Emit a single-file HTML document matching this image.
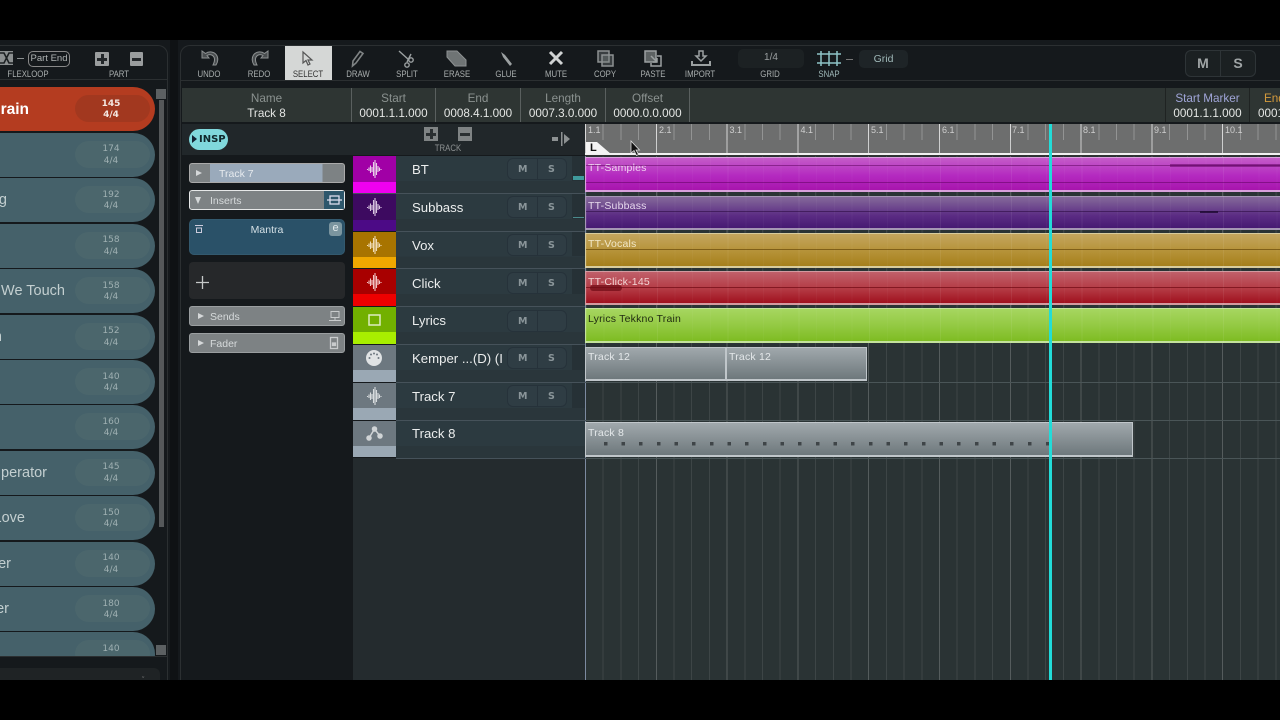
<!DOCTYPE html>
<html><head><meta charset="utf-8">
<style>
html,body{margin:0;padding:0;width:1280px;height:720px;overflow:hidden;background:#000}
body{position:relative;font-family:"Liberation Sans",sans-serif;color:#ccc}
div,span{position:absolute;box-sizing:border-box}
svg{position:absolute;overflow:visible}
.t{white-space:nowrap;text-align:center;transform:translateX(-50%)}
.lab{font-size:9.5px;color:#a9aeae;top:69px;transform:translateX(-50%) scaleX(.82)}
.pill{left:-40px;width:195px;height:44px;background:#45616a;border-radius:0 22px 22px 0;}
.pill .in{left:115px;top:8px;width:75px;height:27px;background:#4b666c;border-radius:14px}
.pill .n{left:116px;width:70px;text-align:center;font:9px/11.5px "DejaVu Sans",sans-serif;color:#9fb0b2;top:11.5px;white-space:pre}
.pill .s{font-size:14.5px;color:#c3cfd0;top:14px;white-space:nowrap}
.hdr{top:88px;height:34px;background:#2e3533;border-right:1px solid #5a605f}
.hdr .a{left:0;right:0;top:4px;text-align:center;font-size:11.7px;color:#8b9290}
.hdr .b{left:0;right:0;top:19px;text-align:center;font-size:11.7px;color:#e4e6e4}
.row{left:396px;width:189px;background:linear-gradient(#2c3a40 0,#2c3a40 68%,#2a363b 68%,#2a363b 100%);border-bottom:1px solid #46525a}
.strip::after{content:"";position:absolute;left:176px;right:0;top:0;height:68%;background:#263136}
.cu{left:353px;width:43px}
.cl{left:353px;width:43px}
.nm{left:412px;font-size:13.2px;color:#eceeee;white-space:nowrap}
.ms{left:507px;width:60px;height:22px;background:#2f3d44;border:1px solid #26323a;border-radius:6px}
.ms b{position:absolute;top:5px;font:bold 9.5px "DejaVu Sans",sans-serif;color:#8a9599}
.ms i{position:absolute;left:29px;top:0;bottom:0;width:1px;background:#26323a}
.clip{left:585px;border:1px solid rgba(255,255,255,.35);border-bottom-width:2px}
.clip span{left:2px;top:4px;font-size:10.5px;letter-spacing:.2px;white-space:nowrap}
.grid{background-image:repeating-linear-gradient(90deg,rgba(255,255,255,.09) 0,rgba(255,255,255,.09) 1px,transparent 1px,transparent 17.7px),repeating-linear-gradient(90deg,rgba(255,255,255,.12) 0,rgba(255,255,255,.12) 1px,transparent 1px,transparent 70.8px)}
.insp{left:189px;width:156px;height:20px;border:1px solid #cfd3d4;border-radius:3px;background:#7d8284}
.insp span{font-size:10.5px;top:3.5px;color:#d6dadb;white-space:nowrap}
.tri{width:0;height:0;border-left:6px solid #d5d8d9;border-top:3.5px solid transparent;border-bottom:3.5px solid transparent}
</style></head><body>

<!-- main app background -->
<div style="left:0;top:40px;width:1280px;height:640px;background:#15191c"></div>
<div style="left:170px;top:40px;width:8px;height:640px;background:#0f1214"></div>
<div style="left:0;top:45px;width:168px;height:635px;border-right:1px solid #2b2f31;border-top:1px solid #2b2f31;border-top-right-radius:10px"></div>
<div style="left:180px;top:45px;width:1100px;height:635px;border-left:1px solid #2b2f31;border-top:1px solid #2b2f31;border-top-left-radius:10px"></div>
<div style="left:0;top:79px;width:168px;height:1px;background:#2b2f31"></div>
<div style="left:181px;top:80px;width:1099px;height:1px;background:#2b2f31"></div>

<!-- left toolbar -->
<svg style="left:0;top:50px" width="14" height="16"><rect x="-2" y="1" width="15" height="14" fill="#8b8f90"/><path d="M0 3 L4 3 L9 13 L13 13 M0 13 L4 13 L9 3 L13 3" stroke="#1c2022" stroke-width="1.6" fill="none"/></svg>
<div style="left:17px;top:58px;width:7px;height:1px;background:#8b8f90"></div>
<div style="left:28px;top:51px;width:42px;height:16px;border:1px solid #888;border-radius:5px;font-size:9.500px;line-height:14px;text-align:center;color:#b0b4b4;white-space:nowrap">Part End</div>
<div class="t lab" style="left:28px">FLEXLOOP</div>
<div class="t lab" style="left:119px">PART</div>
<div style="left:95px;top:52px;width:14px;height:14px;background:#9a9d9e;border-radius:1px"></div>
<div style="left:100.5px;top:54px;width:3px;height:10px;background:#23272a"></div><div style="left:97px;top:57.5px;width:10px;height:3px;background:#23272a"></div>
<div style="left:130px;top:52px;width:13px;height:14px;background:#9a9d9e;border-radius:1px"></div>
<div style="left:132px;top:57.5px;width:9px;height:3px;background:#23272a"></div>

<!-- song list -->
<div class="pill" style="top:87px;background:#b43c20"><div class="in" style="background:#a2381f"></div><div class="n" style="color:#f3e6e0;font-weight:bold">145
4/4</div><div class="s" style="color:#fff;font-weight:bold;right:126px;font-size:15.5px;top:14px">rain</div></div>
<div class="pill" style="top:132.5px"><div class="in"></div><div class="n">174
4/4</div></div>
<div class="pill" style="top:178px"><div class="in"></div><div class="n">192
4/4</div><div class="s" style="right:148px">g</div></div>
<div class="pill" style="top:223.5px"><div class="in"></div><div class="n">158
4/4</div></div>
<div class="pill" style="top:269px"><div class="in"></div><div class="n">158
4/4</div><div class="s" style="right:90px">We Touch</div></div>
<div class="pill" style="top:314.5px"><div class="in"></div><div class="n">152
4/4</div><div class="s" style="right:153px">n</div></div>
<div class="pill" style="top:360px"><div class="in"></div><div class="n">140
4/4</div></div>
<div class="pill" style="top:405px"><div class="in"></div><div class="n">160
4/4</div></div>
<div class="pill" style="top:450.5px"><div class="in"></div><div class="n">145
4/4</div><div class="s" style="right:108px">perator</div></div>
<div class="pill" style="top:496px"><div class="in"></div><div class="n">150
4/4</div><div class="s" style="right:130px">Love</div></div>
<div class="pill" style="top:541.5px"><div class="in"></div><div class="n">140
4/4</div><div class="s" style="right:144px">er</div></div>
<div class="pill" style="top:587px"><div class="in"></div><div class="n">180
4/4</div><div class="s" style="right:146px">er</div></div>
<div style="left:0;top:632px;width:160px;height:24px;overflow:hidden"><div class="pill" style="top:0;left:-40px"><div class="in"></div><div class="n">140</div></div></div>
<div style="left:0;top:656px;width:167px;height:1px;background:#2b2f31"></div>
<div style="left:0;top:668px;width:160px;height:12px;background:#1f2325;border-radius:0 6px 0 0"></div>
<div style="left:142px;top:677px;width:6px;height:3px;font-size:7px;color:#999">ˇ</div>
<div style="left:159px;top:100px;width:5px;height:427px;background:#55585a"></div>
<div style="left:156px;top:89px;width:10px;height:10px;background:#5c6062"></div>
<div style="left:156px;top:645px;width:10px;height:10px;background:#5c6062"></div>

<!-- toolbar -->
<div style="left:285px;top:46px;width:47px;height:34px;background:#d5d7d6"></div>
<svg style="left:201px;top:50px" width="18" height="17"><path d="M1 1 L1 8 L8 8 L6 5.500 C9 3.500 13 5 13.500 9 C13.700 11 13 13 12 15 L15 15 C17 12 17.500 8 15.500 5 C13 1.500 8 1 4.500 3.500 Z" fill="#4a4e50" stroke="#8d9192" stroke-width="1"/></svg>
<svg style="left:251px;top:50px" width="18" height="17"><path d="M17 1 L17 8 L10 8 L12 5.500 C9 3.500 5 5 4.500 9 C4.300 11 5 13 6 15 L3 15 C1 12 .5 8 2.500 5 C5 1.500 10 1 13.500 3.500 Z" fill="#4a4e50" stroke="#8d9192" stroke-width="1"/></svg>
<svg style="left:302px;top:51px" width="12" height="16" fill="#d5d7d6" stroke="#555" stroke-width="1.2"><path d="M1 1 L1 12 L4 9.5 L6 14 L8 13 L6 9 L10 9 Z"/></svg>
<svg style="left:350px;top:50px" width="16" height="18" fill="none" stroke="#7f8384" stroke-width="1.6"><path d="M3 11 L10 1.5 L13 3.5 L6 13 L2.5 16 Z"/></svg>
<svg style="left:398px;top:50px" width="18" height="18" fill="none" stroke="#9ba0a1" stroke-width="1.4"><path d="M1 1 L11 10"/><path d="M13 4 L9 12"/><circle cx="13" cy="10" r="2.2"/><circle cx="9" cy="15" r="2.2"/></svg>
<svg style="left:446px;top:50px" width="22" height="18"><path d="M1 1 L11 1 L20 10 L20 16 L9 16 L1 7 Z" fill="#6f7475" stroke="#8d9192"/></svg>
<svg style="left:499px;top:51px" width="16" height="16"><path d="M2 1 L6 4 L13 13 L11 15 L4 6 Z" fill="#9ba0a1"/></svg>
<svg style="left:549px;top:51px" width="14" height="14" stroke="#d0d3d3" stroke-width="3"><path d="M1 1 L13 13 M13 1 L1 13"/></svg>
<svg style="left:597px;top:50px" width="17" height="17" fill="rgba(130,135,136,.35)" stroke="#8d9192" stroke-width="1.5"><rect x="1" y="1" width="11" height="11"/><rect x="5" y="5" width="11" height="11"/></svg>
<svg style="left:644px;top:50px" width="19" height="17" fill="none" stroke="#9ba0a1" stroke-width="1.5"><rect x="1" y="1" width="11" height="11" fill="#5d6263"/><path d="M13 6 L17 6 L17 16 L7 16 L7 13"/><path d="M7 6 L13 12 M13 8 L13 12 L9 12"/></svg>
<svg style="left:691px;top:50px" width="20" height="17" fill="none" stroke="#9ba0a1" stroke-width="1.5"><path d="M8 1 L12 1 L12 6 L15 6 L10 11 L5 6 L8 6 Z"/><path d="M1 11 L1 15 L19 15 L19 11" stroke-width="2"/></svg>

<div class="t lab" style="left:209px">UNDO</div>
<div class="t lab" style="left:259px">REDO</div>
<div class="t lab" style="left:308px;color:#333">SELECT</div>
<div class="t lab" style="left:358px">DRAW</div>
<div class="t lab" style="left:407px">SPLIT</div>
<div class="t lab" style="left:457px">ERASE</div>
<div class="t lab" style="left:506px">GLUE</div>
<div class="t lab" style="left:556px">MUTE</div>
<div class="t lab" style="left:605px">COPY</div>
<div class="t lab" style="left:653px">PASTE</div>
<div class="t lab" style="left:700px">IMPORT</div>
<div class="t lab" style="left:770px">GRID</div>
<div class="t lab" style="left:829px;color:#9fb8b8">SNAP</div>
<div style="left:738px;top:49px;width:66px;height:19px;background:#1c2123;border-radius:5px;font-size:10px;line-height:17px;text-align:center;color:#9a9fa0">1/4</div>
<svg style="left:817px;top:51px" width="25" height="16" stroke="#8fc4c6" stroke-width="1.5"><path d="M0 3 H24 M0 12 H24 M4 0 V15 M12 0 V15 M20 0 V15"/></svg>
<div style="left:846px;top:59px;width:7px;height:1px;background:#777"></div>
<div style="left:859px;top:50px;width:49px;height:18px;background:#1e2427;border-radius:5px;font-size:10.500px;line-height:18px;text-align:center;color:#9fb8b8">Grid</div>
<div style="left:1185px;top:50px;width:71px;height:27px;border:1px solid #2e3437;border-radius:6px;background:#1b2022"></div>
<div style="left:1220px;top:51px;width:1px;height:25px;background:#2e3437"></div>
<div class="t" style="left:1203px;top:55px;font:bold 14px 'Liberation Sans',sans-serif;color:#a0a5a6">M</div>
<div class="t" style="left:1238px;top:55px;font:bold 14px 'Liberation Sans',sans-serif;color:#a0a5a6">S</div>

<!-- info header -->
<div style="left:182px;top:88px;width:1098px;height:34px;background:#2e3533"></div>
<div class="hdr" style="left:182px;width:170px"><div class="a">Name</div><div class="b">Track 8</div></div>
<div class="hdr" style="left:352px;width:84px"><div class="a">Start</div><div class="b">0001.1.1.000</div></div>
<div class="hdr" style="left:436px;width:85px"><div class="a">End</div><div class="b">0008.4.1.000</div></div>
<div class="hdr" style="left:521px;width:85px"><div class="a">Length</div><div class="b">0007.3.0.000</div></div>
<div class="hdr" style="left:606px;width:84px"><div class="a">Offset</div><div class="b">0000.0.0.000</div></div>
<div class="hdr" style="left:1165px;width:85px;border-left:1px solid #1f2322;border-right:1px solid #1f2322"><div class="a" style="color:#a0a5d8">Start Marker</div><div class="b">0001.1.1.000</div></div>
<div style="left:1250px;top:88px;width:30px;height:34px;overflow:hidden"><div class="a" style="left:14px;top:4px;font-size:11.700px;color:#d49a3c;white-space:nowrap">End</div><div style="left:8px;top:19px;font-size:11.700px;color:#e4e6e4;white-space:nowrap">0001</div></div>

<!-- inspector header -->
<div style="left:182px;top:124px;width:171px;height:31px;background:#21272a"></div>
<div style="left:353px;top:124px;width:232px;height:31px;background:#21272a"></div>
<div style="left:189px;top:129px;width:39px;height:21px;background:#80d8dc;border-radius:11px"></div>
<div style="left:192px;top:135px;width:0;height:0;border-left:5px solid #123;border-top:4.5px solid transparent;border-bottom:4.5px solid transparent"></div>
<div style="left:199px;top:133.5px;font:bold 10px 'DejaVu Sans',sans-serif;color:#10282c">INSP</div>
<div style="left:424px;top:127px;width:14px;height:14px;background:#7f8384"></div>
<div style="left:429.500px;top:129px;width:3px;height:10px;background:#2a2f31"></div><div style="left:426px;top:132.5px;width:10px;height:3px;background:#2a2f31"></div>
<div style="left:458px;top:127px;width:14px;height:14px;background:#7f8384"></div>
<div style="left:460px;top:132.5px;width:10px;height:3px;background:#2a2f31"></div>
<div class="t" style="left:448px;top:143px;font-size:9.500px;color:#8d9192;transform:translateX(-50%) scaleX(.82)">TRACK</div>
<svg style="left:552px;top:131px" width="20" height="17" fill="#8d9192"><rect x="0" y="6" width="6" height="4"/><rect x="9" y="1" width="1.500" height="14"/><path d="M12 3 L18 8 L12 13 Z"/></svg>

<!-- inspector -->
<div class="insp" style="top:163px;border-color:#aaa;background:linear-gradient(90deg,#7d8284 0,#7d8284 13%,#9aaabb 13%,#9aaabb 86%,#7d8284 86%)"><div class="tri" style="left:6px;top:6px"></div><span style="left:29px;color:#e6eaee">Track 7</span></div>
<div class="insp" style="top:190px;border-color:#e6e8e8"><div class="tri" style="left:5px;top:6px;border:0;border-top:7px solid #d5d8d9;border-left:3.5px solid transparent;border-right:3.5px solid transparent"></div><span style="left:20px">Inserts</span><div style="right:0;top:0;bottom:0;width:20px;background:#2d566b"></div><svg style="left:137px;top:3px" width="15" height="12" stroke="#dde" fill="none" stroke-width="1.300"><path d="M0 6 H15"/><rect x="3" y="2" width="9" height="8"/></svg></div>
<div style="left:189px;top:219px;width:156px;height:36px;background:#2a5168;border-radius:5px;border:1px solid #33596e"></div>
<div class="t" style="left:267px;top:223.5px;font-size:10.500px;color:#d4e0e6">Mantra</div>
<svg style="left:195px;top:225px" width="8" height="9" fill="none" stroke="#ccd" stroke-width="1"><path d="M0 .5 H8"/><rect x="1.500" y="3" width="5" height="4.500"/></svg>
<div style="left:329px;top:222px;width:13px;height:14px;background:#7b959f;border-radius:3px;font-size:11px;line-height:13px;text-align:center;color:#e0e8ea">e</div>
<div style="left:189px;top:262px;width:156px;height:37px;background:#26282a;border-radius:4px"></div>
<svg style="left:196px;top:276px" width="13" height="13" stroke="#c5c8c8" stroke-width="1.300"><path d="M6.500 0 V13 M0 6.500 H13"/></svg>
<div class="insp" style="top:306px;border-color:#9a9ea0"><div class="tri" style="left:8px;top:6px"></div><span style="left:20px">Sends</span><svg style="left:139px;top:4px" width="12" height="11" fill="none" stroke="#c8cbcc"><rect x="2" y=".5" width="8" height="6"/><path d="M0 9.500 H12 M6 7 V9"/></svg></div>
<div class="insp" style="top:333px;border-color:#9a9ea0"><div class="tri" style="left:8px;top:6px"></div><span style="left:20px">Fader</span><svg style="left:140px;top:3px" width="8" height="12" fill="none" stroke="#c8cbcc" stroke-width="1.300"><rect x=".5" y=".5" width="7" height="11"/><rect x="2.500" y="6" width="3" height="2.500" fill="#c8cbcc"/></svg></div>

<!-- arrange -->
<div class="grid" style="left:585px;top:156px;width:695px;height:524px;background-color:#2a3334"></div>
<div style="left:585px;top:124px;width:1px;height:556px;background:#7c8aa0"></div>
<div style="left:353px;top:458px;width:232px;height:222px;background:#242b2e"></div>

<!-- ruler -->
<div style="left:585px;top:124px;width:695px;height:31px;background:#6d6e6e"></div>
<div style="left:585px;top:124px;width:695px;height:28px;background-image:repeating-linear-gradient(90deg,rgba(235,235,235,.3) 0,rgba(235,235,235,.3) 1px,transparent 1px,transparent 17.7px);clip-path:inset(0 0 12px 0)"></div>
<div style="left:585px;top:124px;width:695px;height:29px;background-image:repeating-linear-gradient(90deg,rgba(245,245,245,.7) 0,rgba(245,245,245,.7) 1px,transparent 1px,transparent 70.8px)"></div>
<div style="left:585px;top:153px;width:695px;height:3px;background:#f1f1f1;border-bottom:1px solid #333"></div>
<svg style="left:586px;top:142px" width="26" height="12"><path d="M0 0 L11 0 L25 12 L0 12 Z" fill="#f4f4f4"/></svg>
<div style="left:590px;top:142px;font:bold 11px 'Liberation Sans',sans-serif;color:#111">L</div>
<svg style="left:630px;top:140px" width="11" height="17"><path d="M1 1 L1 13 L4 10.500 L6.500 15.500 L8.500 14.500 L6 10 L9.500 10 Z" fill="#111" stroke="#ddd" stroke-width=".8"/></svg>
<span style="left:588px;top:125px;font-size:9px;color:#cfcfcf">1.1</span>
<span style="left:659px;top:125px;font-size:9px;color:#cfcfcf">2.1</span>
<span style="left:729.500px;top:125px;font-size:9px;color:#cfcfcf">3.1</span>
<span style="left:800.500px;top:125px;font-size:9px;color:#cfcfcf">4.1</span>
<span style="left:871px;top:125px;font-size:9px;color:#cfcfcf">5.1</span>
<span style="left:942px;top:125px;font-size:9px;color:#cfcfcf">6.1</span>
<span style="left:1012px;top:125px;font-size:9px;color:#cfcfcf">7.1</span>
<span style="left:1083px;top:125px;font-size:9px;color:#cfcfcf">8.1</span>
<span style="left:1154px;top:125px;font-size:9px;color:#cfcfcf">9.1</span>
<span style="left:1225px;top:125px;font-size:9px;color:#cfcfcf">10.1</span>

<!-- track rows -->
<div class="row strip" style="top:156px;height:38px"></div>
<div class="row strip" style="top:194px;height:38px"></div>
<div class="row strip" style="top:232px;height:37px"></div>
<div class="row strip" style="top:269px;height:38px"></div>
<div class="row" style="top:307px;height:38px"></div>
<div class="row strip" style="top:345px;height:38px"></div>
<div class="row strip" style="top:383px;height:38px"></div>
<div class="row" style="top:421px;height:38px"></div>
<div style="left:353px;top:193px;width:232px;height:1px;background:#46525a"></div>

<div class="cu" style="top:156px;height:26px;background:#a100a6"></div><div class="cl" style="top:182px;height:11px;background:#f000f0"></div>
<div class="cu" style="top:194px;height:26px;background:#3d0a60"></div><div class="cl" style="top:220px;height:11px;background:#4c0a86"></div>
<div class="cu" style="top:232px;height:25px;background:#a87400"></div><div class="cl" style="top:257px;height:11px;background:#f0a800"></div>
<div class="cu" style="top:269px;height:25px;background:#a80000"></div><div class="cl" style="top:294px;height:12px;background:#ee0000"></div>
<div class="cu" style="top:307px;height:25px;background:#72b000"></div><div class="cl" style="top:332px;height:12px;background:#a8ee00"></div>
<div class="cu" style="top:345px;height:25px;background:#6d7880"></div><div class="cl" style="top:370px;height:12px;background:#9aa8b4"></div>
<div class="cu" style="top:383px;height:25px;background:#6d7880"></div><div class="cl" style="top:408px;height:12px;background:#9aa8b4"></div>
<div class="cu" style="top:421px;height:25px;background:#6d7880"></div><div class="cl" style="top:446px;height:11px;background:#9aa8b4"></div>

<svg style="left:367px;top:160px" width="15" height="18" stroke="#e9cfe9" stroke-width="1.100"><path d="M0.500 9 V10 M2 7.500 V11 M3.500 5.500 V13 M5 7 V12 M6.500 2 V16 M8 0 V18 M9.500 3 V15 M11 6 V12 M12.500 7.500 V11 M14 9 V10"/></svg>
<svg style="left:367px;top:198px" width="15" height="18" stroke="#d8c4e0" stroke-width="1.100"><path d="M0.500 9 V10 M2 7.500 V11 M3.500 5.500 V13 M5 7 V12 M6.500 2 V16 M8 0 V18 M9.500 3 V15 M11 6 V12 M12.500 7.500 V11 M14 9 V10"/></svg>
<svg style="left:367px;top:236px" width="15" height="18" stroke="#f0dcb8" stroke-width="1.100"><path d="M0.500 9 V10 M2 7.500 V11 M3.500 5.500 V13 M5 7 V12 M6.500 2 V16 M8 0 V18 M9.500 3 V15 M11 6 V12 M12.500 7.500 V11 M14 9 V10"/></svg>
<svg style="left:367px;top:273px" width="15" height="18" stroke="#f0c4c4" stroke-width="1.100"><path d="M0.500 9 V10 M2 7.500 V11 M3.500 5.500 V13 M5 7 V12 M6.500 2 V16 M8 0 V18 M9.500 3 V15 M11 6 V12 M12.500 7.500 V11 M14 9 V10"/></svg>
<svg style="left:368px;top:314px" width="13" height="13" fill="none" stroke="#dcecc0" stroke-width="1.500"><rect x="1" y="1" width="11" height="10"/></svg>
<svg style="left:366px;top:350px" width="16" height="16"><circle cx="8" cy="8" r="8" fill="#e0e3e4"/><g fill="#6d7880"><circle cx="3.500" cy="8" r="1"/><circle cx="5" cy="4.500" r="1"/><circle cx="8" cy="3.500" r="1"/><circle cx="11" cy="4.500" r="1"/><circle cx="12.500" cy="8" r="1"/></g></svg>
<svg style="left:367px;top:387px" width="15" height="18" stroke="#d8dcde" stroke-width="1.100"><path d="M0.500 9 V10 M2 7.500 V11 M3.500 5.500 V13 M5 7 V12 M6.500 2 V16 M8 0 V18 M9.500 3 V15 M11 6 V12 M12.500 7.500 V11 M14 9 V10"/></svg>
<svg style="left:366px;top:426px" width="17" height="15" fill="#d0d4d6" stroke="#d0d4d6" stroke-width="1.500"><path d="M3 12 L8.500 3 L14 10" fill="none"/><circle cx="3" cy="12" r="2"/><circle cx="8.500" cy="3" r="2"/><circle cx="14" cy="10" r="2"/></svg>

<div class="nm" style="top:162px">BT</div>
<div class="nm" style="top:200px">Subbass</div>
<div class="nm" style="top:238px">Vox</div>
<div class="nm" style="top:276px">Click</div>
<div class="nm" style="top:313px">Lyrics</div>
<div class="nm" style="top:351px;width:93px;overflow:hidden">Kemper ...(D) (I</div>
<div class="nm" style="top:389px">Track 7</div>
<div class="nm" style="top:426px">Track 8</div>

<div class="ms" style="top:158px"><b style="left:10px">M</b><i></i><b style="left:40px">S</b></div>
<div class="ms" style="top:196px"><b style="left:10px">M</b><i></i><b style="left:40px">S</b></div>
<div class="ms" style="top:234px"><b style="left:10px">M</b><i></i><b style="left:40px">S</b></div>
<div class="ms" style="top:272px"><b style="left:10px">M</b><i></i><b style="left:40px">S</b></div>
<div class="ms" style="top:310px"><b style="left:10px">M</b><i></i></div>
<div class="ms" style="top:347px"><b style="left:10px">M</b><i></i><b style="left:40px">S</b></div>
<div class="ms" style="top:385px"><b style="left:10px">M</b><i></i><b style="left:40px">S</b></div>
<div style="left:573px;top:176px;width:11px;height:4px;background:#3f9a9c"></div>
<div style="left:573px;top:217px;width:11px;height:1px;background:#4a8a8c"></div>

<!-- clips -->
<div class="clip" style="top:157px;width:710px;height:35px;background:linear-gradient(#c45cc8,#b42ac0 55%,#a815ad);border-color:#d9a0dc"><span style="color:#f2d4f2">TT-Samples</span></div>
<div class="clip" style="top:196px;width:710px;height:34px;background:linear-gradient(#856a9a,#5b2c84 60%,#471a72);border-color:#a596b4"><span style="color:#e6d8ec;top:3px">TT-Subbass</span></div>
<div class="clip" style="top:233px;width:710px;height:35px;background:linear-gradient(#c4a65e,#b49034 60%,#a57f1c);border-color:#d8cc9c"><span style="color:#f2e8c8">TT-Vocals</span></div>
<div class="clip" style="top:271px;width:710px;height:34px;background:linear-gradient(#c0606a,#b43a44 55%,#a0101e);border-color:#d29aa0"><span style="color:#f2d4d4">TT-Click-145</span></div>
<div class="clip" style="top:308px;width:710px;height:35px;background:linear-gradient(#a6d660,#94ca44 50%,#7ebc22);border-color:#c4e29c"><span style="color:#1f2a10;top:3.500px">Lyrics Tekkno Train</span></div>
<div class="clip" style="top:347px;width:141px;height:34px;background:linear-gradient(#a0a8ac,#6e787c);border-color:#c0c6ca"><span style="color:#e4e8ea;top:3px">Track 12</span></div>
<div class="clip" style="top:347px;left:726px;width:141px;height:34px;background:linear-gradient(#a0a8ac,#6e787c);border-color:#c0c6ca"><span style="color:#e4e8ea;top:3px">Track 12</span></div>
<div class="clip" style="top:422px;width:548px;height:35px;background:linear-gradient(#a0a8ac,#6e787c);border-color:#c0c6ca"><span style="color:#e4e8ea">Track 8</span></div>
<!-- clip texture -->
<div class="grid" style="left:586px;top:157px;width:694px;height:186px;opacity:.35;clip-path:inset(0)"></div>
<div style="left:586px;top:165px;width:694px;height:1px;background:rgba(90,0,90,.5)"></div>
<div style="left:586px;top:182px;width:694px;height:1px;background:rgba(90,0,90,.5)"></div>
<div style="left:1170px;top:164px;width:110px;height:3px;background:rgba(90,0,90,.5)"></div>
<div style="left:586px;top:211px;width:694px;height:1px;background:rgba(40,10,60,.55)"></div>
<div style="left:1200px;top:211px;width:18px;height:2px;background:rgba(30,10,50,.8)"></div>
<div style="left:586px;top:249px;width:694px;height:1px;background:rgba(90,60,0,.6)"></div>
<div style="left:586px;top:287px;width:694px;height:1px;background:rgba(100,0,10,.6)"></div>
<div style="left:590px;top:285px;width:32px;height:6px;background:rgba(110,10,20,.7);border-radius:3px"></div>
<!-- track 8 dots -->
<svg style="left:586px;top:440px" width="470" height="6" fill="#3f4548">
<rect x="18" y="2" width="3.500" height="3.500"/><rect x="35.500" y="2" width="3.500" height="3.500"/><rect x="53" y="2" width="3.500" height="3.500"/><rect x="71" y="2" width="3.500" height="3.500"/><rect x="88.500" y="2" width="3.500" height="3.500"/><rect x="106" y="2" width="3.500" height="3.500"/><rect x="124" y="2" width="3.500" height="3.500"/><rect x="141.500" y="2" width="3.500" height="3.500"/><rect x="159" y="2" width="3.500" height="3.500"/><rect x="177" y="2" width="3.500" height="3.500"/><rect x="194.500" y="2" width="3.500" height="3.500"/><rect x="212" y="2" width="3.500" height="3.500"/><rect x="230" y="2" width="3.500" height="3.500"/><rect x="247.500" y="2" width="3.500" height="3.500"/><rect x="265" y="2" width="3.500" height="3.500"/><rect x="283" y="2" width="3.500" height="3.500"/><rect x="300.500" y="2" width="3.500" height="3.500"/><rect x="318" y="2" width="3.500" height="3.500"/><rect x="336" y="2" width="3.500" height="3.500"/><rect x="353.500" y="2" width="3.500" height="3.500"/><rect x="371" y="2" width="3.500" height="3.500"/><rect x="389" y="2" width="3.500" height="3.500"/><rect x="406.500" y="2" width="3.500" height="3.500"/><rect x="424" y="2" width="3.500" height="3.500"/><rect x="442" y="2" width="3.500" height="3.500"/><rect x="460" y="2" width="3.500" height="3.500"/>
</svg>
<div style="left:585px;top:382px;width:695px;height:1px;background:#4a5557"></div>
<div style="left:585px;top:420px;width:695px;height:1px;background:#4a5557"></div>
<div style="left:585px;top:458px;width:695px;height:1px;background:#4a5557"></div>

<!-- playhead -->
<div style="left:1049px;top:124px;width:3px;height:556px;background:#22dcd8"></div>

</body></html>
